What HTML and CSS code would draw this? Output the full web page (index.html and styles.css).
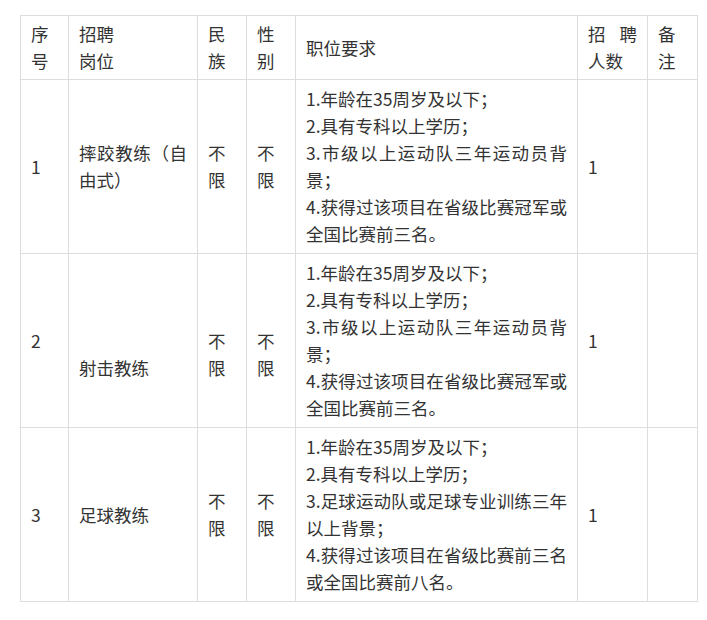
FILE: index.html
```html
<!DOCTYPE html>
<html lang="zh-CN">
<head>
<meta charset="utf-8">
<link rel="stylesheet" href="styles.css">
</head>
<body>
<table class="jobs">
  <colgroup>
    <col class="c-no">
    <col class="c-post">
    <col class="c-nation">
    <col class="c-sex">
    <col class="c-req">
    <col class="c-num">
    <col class="c-note">
  </colgroup>
  <thead>
    <tr>
      <th>序号</th>
      <th>招聘<br>岗位</th>
      <th>民族</th>
      <th>性别</th>
      <th>职位要求</th>
      <th>招聘人数</th>
      <th>备注</th>
    </tr>
  </thead>
  <tbody>
    <tr>
      <td>1</td>
      <td>摔跤教练（自由式）</td>
      <td>不限</td>
      <td>不限</td>
      <td>1.年龄在35周岁及以下；<br>2.具有专科以上学历；<br>3.市级以上运动队三年运动员背景；<br>4.获得过该项目在省级比赛冠军或全国比赛前三名。</td>
      <td>1</td>
      <td></td>
    </tr>
    <tr>
      <td>2</td>
      <td><br><br>射击教练</td>
      <td><br>不限</td>
      <td><br>不限</td>
      <td>1.年龄在35周岁及以下；<br>2.具有专科以上学历；<br>3.市级以上运动队三年运动员背景；<br>4.获得过该项目在省级比赛冠军或全国比赛前三名。</td>
      <td>1</td>
      <td></td>
    </tr>
    <tr>
      <td>3</td>
      <td>足球教练</td>
      <td>不限</td>
      <td>不限</td>
      <td>1.年龄在35周岁及以下；<br>2.具有专科以上学历；<br>3.足球运动队或足球专业训练三年以上背景；<br>4.获得过该项目在省级比赛前三名或全国比赛前八名。</td>
      <td>1</td>
      <td></td>
    </tr>
  </tbody>
</table>
</body>
</html>
```

FILE: styles.css
```css
html, body {
  margin: 0;
  padding: 0;
  background: #ffffff;
}

body {
  padding: 15px 0 0 20px;
  font-family: "Noto Sans CJK SC", "Noto Sans", sans-serif;
  color: #333333;
}

.jobs {
  border-collapse: collapse;
  table-layout: fixed;
  width: 677px;
  font-size: 17.5px;
  line-height: 27px;
}

.c-no { width: 48px; }
.c-post { width: 129px; }
.c-nation { width: 49px; }
.c-sex { width: 49px; }
.c-req { width: 282px; }
.c-num { width: 70px; }
.c-note { width: 50px; }

.jobs th,
.jobs td {
  border: 1px solid #dddddd;
  text-align: justify;
  vertical-align: middle;
  font-weight: normal;
  word-break: normal;
}

.jobs th {
  padding: 4px 10px 5px;
}

.jobs td {
  padding: 5px 10px 6px;
}
```
